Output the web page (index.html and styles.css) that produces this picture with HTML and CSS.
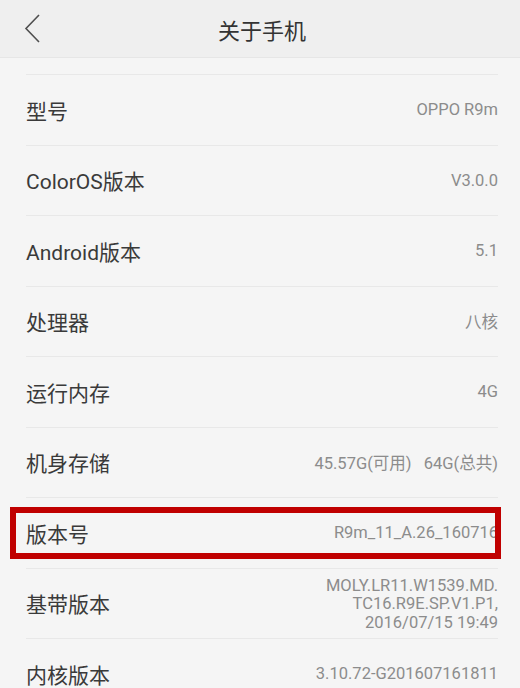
FILE: index.html
```html
<!doctype html>
<html lang="zh-CN">
<head>
    <meta charset="UTF-8">
    <title>关于手机</title>
    <meta name="viewport" content="width=device-width">
    <link rel="stylesheet" href="styles.css">
</head>
<body>

    <div id="header">
        <span class="back">
            <svg width="20" height="32" viewBox="0 0 20 32">
                <polyline points="16,3 3,16.5 16,30" fill="none" stroke="#4f4f4f" stroke-width="1.6" stroke-linejoin="miter"/>
            </svg>
        </span>
        <h1>关于手机</h1>
    </div>

    <div id="list">

        <div class="row">
            <label>型号</label>
            <span class="value">OPPO R9m</span>
        </div>

        <div class="row">
            <label>ColorOS版本</label>
            <span class="value">V3.0.0</span>
        </div>

        <div class="row">
            <label>Android版本</label>
            <span class="value">5.1</span>
        </div>

        <div class="row">
            <label>处理器</label>
            <span class="value">八核</span>
        </div>

        <div class="row">
            <label>运行内存</label>
            <span class="value">4G</span>
        </div>

        <div class="row">
            <label>机身存储</label>
            <span class="value">45.57G(可用)&nbsp;&nbsp;&nbsp;64G(总共)</span>
        </div>

        <div class="row marked">
            <label>版本号</label>
            <span class="value">R9m_11_A.26_160716</span>
            <div class="mark"></div>
        </div>

        <div class="row">
            <label>基带版本</label>
            <span class="value multi">MOLY.LR11.W1539.MD.<br>TC16.R9E.SP.V1.P1,<br>2016/07/15 19:49</span>
        </div>

        <div class="row">
            <label>内核版本</label>
            <span class="value">3.10.72-G201607161811</span>
        </div>

    </div>

</body>
</html>
```

FILE: styles.css
```css
body{
    margin: 0;
    font-family: Roboto, "Noto Sans CJK SC", sans-serif;
    background-color: #f5f5f5;
    color: #3a3a3a;
    overflow: hidden;
}

#header{
    height: 57px;
    background-color: #efefef;
    border-bottom: 1px solid #e6e6e6;
    display: flex;
    align-items: center;
    justify-content: center;
    position: relative;
}

#header h1{
    margin: 0 0 0 4px;
    font-size: 22px;
    font-weight: normal;
    color: #333;
}

.back{
    position: absolute;
    left: 23px;
    top: 12px;
}

.back svg{
    display: block;
}

#list{
    padding-top: 16px;
}

.row{
    box-sizing: border-box;
    height: 70.5px;
    margin: 0 22px 0 26px;
    border-top: 1px solid #e8e8e8;
    display: flex;
    align-items: center;
    justify-content: space-between;
    position: relative;
}

.row label{
    font-size: 21px;
    color: #3a3a3a;
    white-space: nowrap;
}

.value{
    font-size: 16.5px;
    color: #8c8c8c;
    text-align: right;
    white-space: nowrap;
}

.value.multi{
    line-height: 18.5px;
    margin-top: 2px;
}

.mark{
    position: absolute;
    left: -16px;
    right: -3px;
    top: 9px;
    bottom: 9px;
    border: 6px solid #c00000;
}
```
